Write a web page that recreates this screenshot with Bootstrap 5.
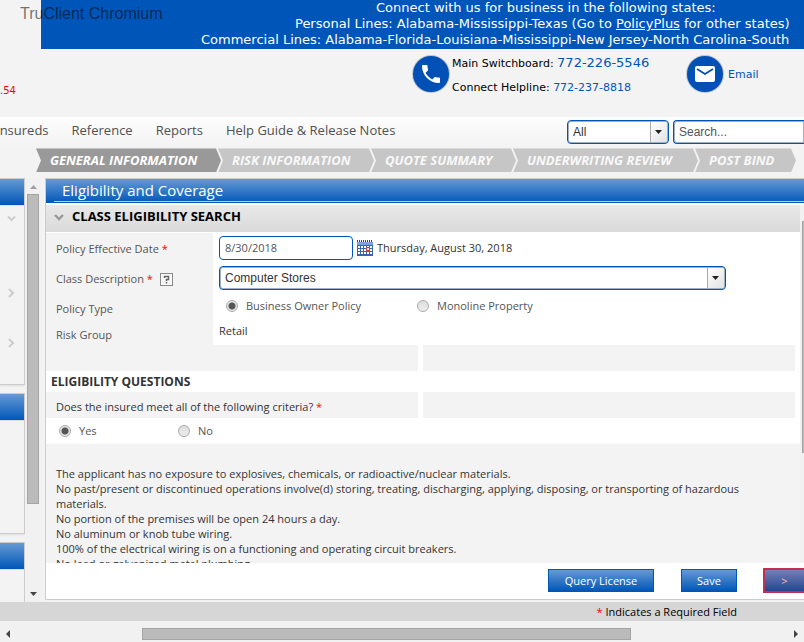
<!DOCTYPE html>
<html lang="en">
<head>
<meta charset="utf-8">
<meta name="viewport" content="width=device-width, initial-scale=1">
<title>Eligibility and Coverage</title>
<link href="https://cdn.jsdelivr.net/npm/bootstrap@5.3.0/dist/css/bootstrap.min.css" rel="stylesheet">
<style>
:root{--blue:#0056b8;--grey:#f3f3f3;--grad:linear-gradient(#659ad4,#0056b8)}
body{background:var(--grey);font-family:"Open Sans","Noto Sans",sans-serif;font-size:11px;line-height:16px;color:#333}
a{text-decoration:none;color:var(--blue)}
.verd{font-family:"DejaVu Sans",Verdana,sans-serif}
.overlay-title{left:20px;top:4px;font:16px/20px "Liberation Sans",Arial,sans-serif;color:rgba(0,0,0,.55);z-index:5}
.banner{background:var(--blue);margin-left:41px;height:49px;font-size:13px;line-height:16px}
.banner a{color:#fff;text-decoration:underline}
.banner .l1{padding-left:335px}.banner .l2{padding-left:254px}.banner .l3{padding-left:160px}
.contact{height:68px;font-size:11px;line-height:24px;padding-top:2px}
.big-no{font-size:13px}
.client-no{width:412px;color:red;padding-top:28px;font-size:10px}
.phones{width:234px;margin-left:2px}
.mail{font-size:11px}
.menu{height:32px;background:linear-gradient(#fdfdfd,var(--grey));padding-top:3px}
.menu nav{gap:23px;font-size:13px;line-height:20px;width:567px;margin-left:-4px}
.menu nav a{color:#505050}
.combo,.searchbox,.datebox{height:24px;border:1px solid var(--blue);border-radius:4px;background-color:#fff;font:12px/16px "Liberation Sans",Arial,sans-serif;color:#333;padding:0 5px;outline:0}
.combo,.searchbox{box-shadow:inset 0 0 0 1px #9fb0c4}
.combo{appearance:none;width:100%}
.combo-wrap{width:102px}
.combo-wrap::after{content:"";position:absolute;right:2px;top:2px;bottom:2px;width:17px;border-left:1px solid #aaa;border-radius:0 2px 2px 0;background:linear-gradient(135deg,#fff,#e2e2e2);pointer-events:none}
.combo-wrap svg{position:absolute;right:7px;top:10px;z-index:2;pointer-events:none}
.searchbox{min-width:0;margin-left:4px;border-right:0;border-radius:4px 0 0 4px}
.searchbox::placeholder{color:#555;opacity:1}
.steps{height:24px;margin-left:36px;font-size:13px;font-weight:700;font-style:italic;line-height:24px}
.steps a{color:#f8f8f8;background:#c6c6c6;clip-path:polygon(0 0,calc(100% - 5px) 0,100% 50%,calc(100% - 5px) 100%,0 100%,5px 50%);padding-left:14px;margin-right:-3px}
.steps a.now{background:#999;color:#fff}
.w185{width:185px}.w156{width:156px}.w144{width:145px}.w184{width:185px}.w101{width:101px}
.work{margin-top:6px;min-height:0}
.side{width:25px}
.side-box{border:1px solid #ccc;border-left:0;box-shadow:0 1px 2px #ddd}
.side-box .cap{height:27px;background:var(--grad);border-bottom:1px solid #ddd}
.s1{height:207px}.s2{height:141px}.side svg{margin-left:7px}
.chev1{margin-top:9px}.chev2{margin-top:66px}.chev3{margin-top:40px}
.vbar{width:16px;margin-right:4px;padding:6px 2px 5px;background:#f1f1f1}
.thumb{background:#bbb;border:1px solid #a4a4a4}
.vbar .thumb{width:12px;height:310px;margin-top:5px}
.panel{border:1px solid #ccc;border-right:0;background:#fff;margin-bottom:2px}
.panel-title{background:var(--grad);height:24px;margin-bottom:2px;padding-left:8px;font-size:15px;line-height:23px;color:#fff}
.panel-title div{border-bottom:1px solid #b9cfea;padding-left:8px;height:23px}
.sec{height:27px;background:linear-gradient(#e8e8e8,#dadada);font-size:13px;line-height:23px;font-weight:700;color:#000;padding-left:8px;margin-bottom:1px}
.scroller{min-height:0}
.lab{width:167px;background:var(--grey);padding-left:10px;color:#555}
.req{color:red}
.r1{height:30px}.r2{height:30px}.r3{height:26px}.r4{height:26px}
.fields{padding-left:6px}
.datebox{width:134px;font-family:"Open Sans",sans-serif;font-size:11px;color:#555}
.cls{width:507px}
.radio-in{appearance:none;width:12px;height:12px;border:1px solid #aaa;border-radius:50%;background:linear-gradient(#ddd,#eee);margin:0}
.radio-in:checked{background:radial-gradient(circle,#555 0 3px,#e6e6e6 4px)}
.ra{width:191px;color:#555;gap:8px;padding-left:7px}
.yn{width:119px;color:#555;gap:8px;padding-left:7px}
.strip{height:26px;padding-right:5px;gap:5px}
.strip .a{flex:0 0 372px;background:var(--grey);padding-left:10px;line-height:30px}
.strip .b{flex:1;background:var(--grey)}
.subhead{font-weight:700;line-height:21px;height:21px;padding-left:5px;font-size:12px}
.answers{height:26px;padding-left:6px}
.crit{background:var(--grey);padding:22px 30px 0 10px;line-height:15px;min-height:0}
.inner-bar{width:4px;background:#f1f1f1}
.inner-bar .thumb{height:232px;margin:16px 0 0 2px;border-right:0}
.actions{height:36px;padding-top:6px}
.act{height:23px;border:1px solid var(--blue);background:var(--grad);color:#fff;padding:0;font-size:11px;line-height:20px}
.q{width:106px;margin-right:27px}.s{width:56px;margin-right:26px}
.next{width:41px;height:25px;border:2px solid #c03050;border-right:0;background:linear-gradient(#7380b4,#254594);margin-top:-1px;color:#fbb}
.note{background:#d6d6d6;height:19px;line-height:19px;color:#000;padding-right:67px}
.hbar{height:21px;background:#f1f1f1;padding:7px 5px 2px}
.hbar .thumb{height:12px;flex:0 0 489px}
.hbar .pre{width:132px}
</style>
</head>
<body class="vh-100 overflow-hidden d-flex flex-column position-relative">
<div class="overlay-title position-absolute">TruClient Chromium</div>
<header class="verd text-nowrap">
  <div class="banner text-white overflow-hidden">
    <div class="l1">Connect with us for business in the following states:</div>
    <div class="l2">Personal Lines: Alabama-Mississippi-Texas (Go to <a href="#">PolicyPlus</a> for other states)</div>
    <div class="l3">Commercial Lines: Alabama-Florida-Louisiana-Mississippi-New Jersey-North Carolina-South</div>
  </div>
  <div class="contact d-flex text-black">
    <div class="client-no">.54</div>
    <svg class="flex-shrink-0 mt-1" width="38" height="38" viewBox="0 0 38 38"><circle cx="19" cy="19" r="19" fill="#b9c3d2"/><circle cx="19" cy="19" r="18" fill="#0050b5"/><path transform="translate(7 7)" fill="#fff" d="M6.6 10.8c1.4 2.8 3.800 5.100 6.600 6.600l2.200-2.200c.3-.3.7-.4 1-.2 1.100.4 2.300.6 3.600.6.600 0 1 .4 1 1V20c0 .6-.4 1-1 1C10.600 21 3 13.400 3 4c0-.6.4-1 1-1h3.500c.6 0 1 .4 1 1 0 1.200.2 2.400.6 3.600.1.3 0 .7-.2 1z"/></svg>
    <div class="phones">
      <div>Main Switchboard: <a href="#" class="big-no">772-226-5546</a></div>
      <div>Connect Helpline: <a href="#">772-237-8818</a></div>
    </div>
    <svg class="flex-shrink-0 mt-1" width="38" height="38" viewBox="0 0 38 38"><circle cx="19" cy="19" r="19" fill="#b9c3d2"/><circle cx="19" cy="19" r="18" fill="#0050b5"/><rect x="9" y="11" width="20" height="16" rx="2" fill="#fff"/><path d="M11 14l8 5 8-5" fill="none" stroke="#0050b5" stroke-width="1.800"/></svg>
    <a href="#" class="mail mt-2 pt-1 ms-1">Email</a>
  </div>
</header>
<div class="menu d-flex align-items-start">
  <nav class="d-flex flex-shrink-0 text-nowrap"><a href="#">Insureds</a><a href="#">Reference</a><a href="#">Reports</a><a href="#">Help Guide &amp; Release Notes</a></nav>
  <div class="combo-wrap position-relative flex-shrink-0 ms-1"><select class="combo d-block" aria-label="Search scope"><option>All</option></select><svg width="7" height="4"><path d="M0 0h7L3.500 4z" fill="#222"/></svg></div>
  <input class="searchbox flex-fill" type="text" placeholder="Search..." aria-label="Search">
</div>
<div class="steps d-flex text-nowrap">
  <a href="#" class="now w185">GENERAL INFORMATION</a><a href="#" class="w156">RISK INFORMATION</a><a href="#" class="w144">QUOTE SUMMARY</a><a href="#" class="w184">UNDERWRITING REVIEW</a><a href="#" class="w101">POST BIND</a>
</div>
<div class="work d-flex flex-fill">
  <aside class="side overflow-hidden d-flex flex-column flex-shrink-0">
    <div class="side-box s1 flex-shrink-0"><div class="cap"></div>
      <svg class="d-block chev1" width="9" height="7"><path d="M1 1.500l3.500 3.500L8 1.500" fill="none" stroke="#ccc" stroke-width="2"/></svg>
      <svg class="d-block chev2" width="9" height="10"><path d="M2 1l4 4-4 4" fill="none" stroke="#ccc" stroke-width="2"/></svg>
      <svg class="d-block chev3" width="9" height="10"><path d="M2 1l4 4-4 4" fill="none" stroke="#ccc" stroke-width="2"/></svg>
    </div>
    <div class="side-box s2 flex-shrink-0 mt-2"><div class="cap"></div></div>
    <div class="side-box flex-fill mt-2 border-bottom-0"><div class="cap"></div></div>
  </aside>
  <div class="vbar d-flex flex-column align-items-center flex-shrink-0">
    <svg width="7" height="5"><path d="M0 5h7L3.500 1z" fill="#a0a0a0"/></svg>
    <div class="thumb"></div>
    <svg class="mt-auto" width="7" height="5"><path d="M0 0h7L3.500 4z" fill="#444"/></svg>
  </div>
  <main class="panel flex-fill d-flex flex-column overflow-hidden">
    <div class="panel-title"><div>Eligibility and Coverage</div></div>
    <div class="scroller d-flex flex-fill">
      <div class="flex-fill d-flex flex-column overflow-hidden">
        <div class="sec flex-shrink-0"><svg class="me-2" width="10" height="8"><path d="M1 2l4 4 4-4" fill="none" stroke="#999" stroke-width="2.400"/></svg>CLASS ELIGIBILITY SEARCH</div>
        <div class="flex-shrink-0">
          <div class="d-flex r1"><label class="lab pt-2" for="eff">Policy Effective Date <span class="req">*</span></label>
            <div class="fields d-flex align-items-center"><input id="eff" class="datebox me-1" type="text" value="8/30/2018">
              <svg width="16" height="16" viewBox="0 0 16 16"><path fill="#3c62b0" d="M0 2h16v14H0z"/><path fill="#7ba1e3" d="M0 2h16v3H0z"/><path fill="#fff" d="M1 6h2v2H1zM4 6h2v2H4zM7 6h2v2H7zM10 6h2v2h-2zM13 6h2v2h-2zM1 9h2v2H1zM4 9h2v2H4zM7 9h2v2H7zM13 9h2v2h-2zM1 12h2v2H1zM4 12h2v2H4zM7 12h2v2H7zM10 12h2v2h-2zM13 12h2v2h-2z"/><path fill="#fff" stroke="#e04020" d="M9.500 7.500h3v3h-3z"/><path stroke="#444" stroke-width="2" stroke-dasharray="1 1" d="M0 1h16"/></svg>
              <span class="ms-1">Thursday, August 30, 2018</span></div></div>
          <div class="d-flex r2"><div class="lab pt-2"><label for="cls">Class Description <span class="req">*</span></label>
              <svg class="ms-1 align-text-bottom" width="13" height="13"><rect x=".5" y=".5" width="12" height="12" fill="#f8f8f8" stroke="#888"/><path d="M4.500 5V3.500h4v3h-2V8M6.500 9v1.500" fill="none" stroke="#666" stroke-width="1.500"/></svg></div>
            <div class="fields d-flex align-items-center"><div class="combo-wrap cls position-relative"><select id="cls" class="combo d-block"><option>Computer Stores</option></select><svg width="7" height="4"><path d="M0 0h7L3.500 4z" fill="#222"/></svg></div></div></div>
          <div class="d-flex r3"><div class="lab pt-2">Policy Type</div>
            <div class="fields d-flex align-items-center">
              <label class="ra d-flex align-items-center"><input class="radio-in" type="radio" name="ptype" checked>Business Owner Policy</label>
              <label class="ra d-flex align-items-center"><input class="radio-in" type="radio" name="ptype">Monoline Property</label></div></div>
          <div class="d-flex r4"><div class="lab pt-2">Risk Group</div><div class="fields pt-1">Retail</div></div>
        </div>
        <div class="strip d-flex flex-shrink-0"><div class="a"></div><div class="b"></div></div>
        <div class="subhead flex-shrink-0">ELIGIBILITY QUESTIONS</div>
        <div class="strip d-flex flex-shrink-0"><div class="a">Does the insured meet all of the following criteria? <span class="req">*</span></div><div class="b"></div></div>
        <div class="answers d-flex flex-shrink-0">
          <label class="yn d-flex align-items-center"><input class="radio-in" type="radio" name="crit" checked>Yes</label>
          <label class="yn d-flex align-items-center"><input class="radio-in" type="radio" name="crit">No</label></div>
        <div class="crit flex-fill overflow-hidden">
          <div>The applicant has no exposure to explosives, chemicals, or radioactive/nuclear materials.</div>
          <div>No past/present or discontinued operations involve(d) storing, treating, discharging, applying, disposing, or transporting of hazardous materials.</div>
          <div>No portion of the premises will be open 24 hours a day.</div>
          <div>No aluminum or knob tube wiring.</div>
          <div>100% of the electrical wiring is on a functioning and operating circuit breakers.</div>
          <div>No lead or galvanized metal plumbing.</div>
        </div>
      </div>
      <div class="inner-bar flex-shrink-0"><div class="thumb"></div></div>
    </div>
    <div class="actions d-flex justify-content-end flex-shrink-0"><button class="act q" type="button">Query License</button><button class="act s" type="button">Save</button><button class="act next" type="button">&gt;</button></div>
  </main>
</div>
<footer class="note text-end flex-shrink-0"><span class="req">*</span> Indicates a Required Field</footer>
<div class="hbar d-flex align-items-center flex-shrink-0">
  <svg width="5" height="8"><path d="M5 0v8L1 4z" fill="#444"/></svg><div class="pre"></div><div class="thumb"></div>
  <svg class="ms-auto" width="5" height="8"><path d="M0 0v8l4-4z" fill="#444"/></svg>
</div>
<script src="https://cdn.jsdelivr.net/npm/bootstrap@5.3.0/dist/js/bootstrap.bundle.min.js"></script>
</body>
</html>
